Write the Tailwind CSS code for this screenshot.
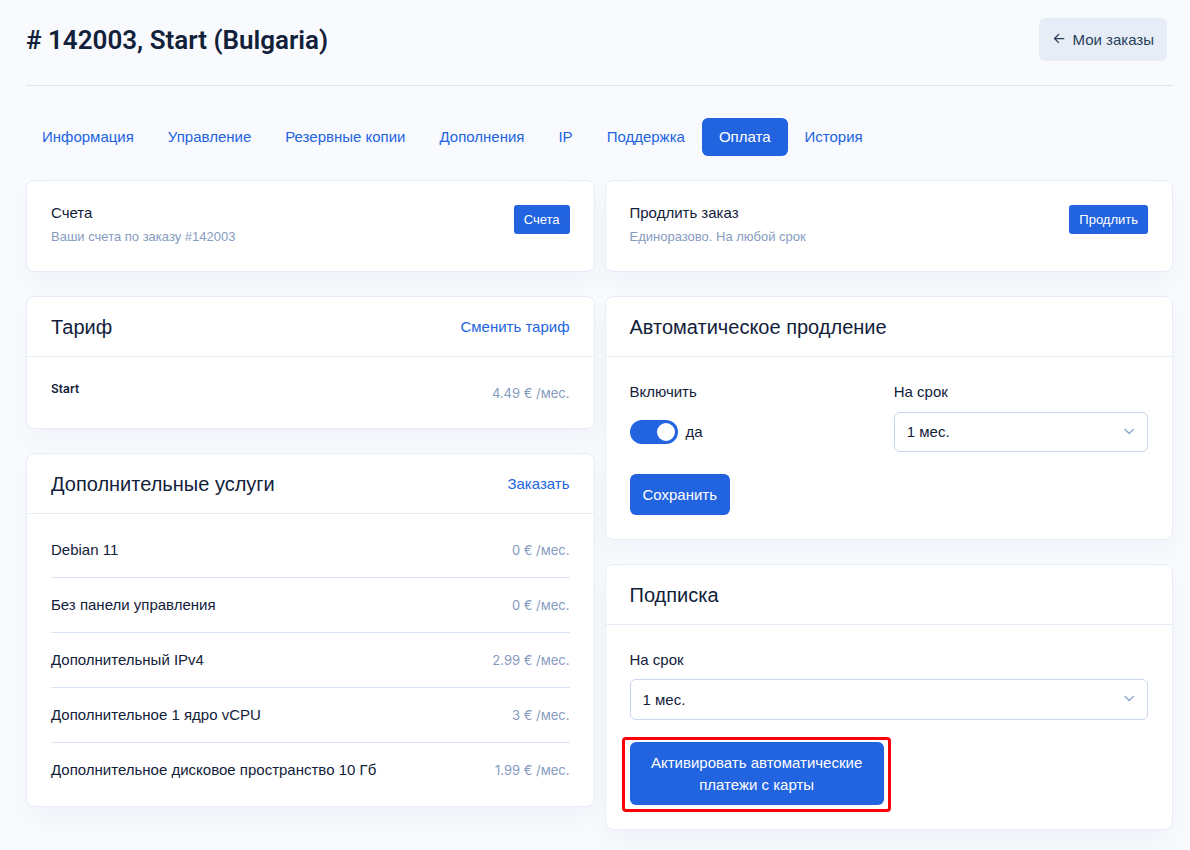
<!DOCTYPE html>
<html lang="ru">
<head>
  <meta charset="UTF-8" />
  <meta name="viewport" content="width=device-width, initial-scale=1.0" />
  <title>Заказ # 142003</title>
  <script src="https://cdn.jsdelivr.net/npm/@tailwindcss/browser@4"></script>
</head>
<body class="min-h-screen bg-[#f8fafe] pl-[26px] pr-[17px] pb-5 font-['Liberation_Sans',Arial,sans-serif] text-[15px] leading-[22px] text-[#12213a]">
  <!-- Header -->
  <header class="flex items-center justify-between border-b border-[#d9e5f2] pt-[18px] pb-6 pr-1.5">
    <h1 class="font-['Roboto',sans-serif] text-[26px] font-semibold"># 142003, Start (Bulgaria)</h1>
    <a href="#" class="flex h-[43px] items-center gap-1.5 rounded-md bg-[#e6edf7] px-[13px] text-[#283e59]">
      <svg class="size-[15px]" viewBox="0 0 24 24" fill="none" stroke="currentColor" stroke-width="2" stroke-linecap="round" stroke-linejoin="round"><path d="M19 10.500H4M10.500 4 4 10.500l6.500 6.500" /></svg>
      Мои заказы
    </a>
  </header>

  <!-- Tabs -->
  <nav class="mt-8 mb-6 -ml-px flex text-[#2264e0]">
    <a href="#" class="px-[17px] py-2">Информация</a>
    <a href="#" class="px-[17px] py-2">Управление</a>
    <a href="#" class="px-[17px] py-2">Резервные копии</a>
    <a href="#" class="px-[17px] py-2">Дополнения</a>
    <a href="#" class="px-[17px] py-2">IP</a>
    <a href="#" class="px-[17px] py-2">Поддержка</a>
    <a href="#" class="rounded-md bg-[#2264e0] px-[17px] py-2 text-white">Оплата</a>
    <a href="#" class="px-[17px] py-2">История</a>
  </nav>

  <main class="grid grid-cols-2 gap-[10px]">
    <!-- Left column -->
    <div class="flex flex-col gap-6">
      <section class="flex items-start justify-between rounded-lg border border-[#e6edf8] bg-white p-6 shadow-[0_12px_24px_rgba(18,38,63,0.03)]">
        <div>
          <h2 class="mb-1.5 leading-4">Счета</h2>
          <p class="text-[13px] leading-5 text-[#869bc0]">Ваши счета по заказу #142003</p>
        </div>
        <button type="button" class="h-[29px] rounded-[3px] bg-[#2264e0] px-[10px] text-[13px] text-white">Счета</button>
      </section>

      <section class="rounded-lg border border-[#e6edf8] bg-white shadow-[0_12px_24px_rgba(18,38,63,0.03)]">
        <div class="flex h-[60px] items-center justify-between border-b border-[#e6edf8] px-6">
          <h2 class="text-xl">Тариф</h2>
          <a href="#" class="text-[#2264e0]">Сменить тариф</a>
        </div>
        <div class="flex items-start justify-between p-6 pb-[23px]">
          <h3 class="font-['Inter',sans-serif] text-xs leading-4 font-semibold">Start</h3>
          <p class="font-['Inter',sans-serif] text-[13px] leading-6 text-[#869bc0]">4.49 € /мес.</p>
        </div>
      </section>

      <section class="rounded-lg border border-[#e6edf8] bg-white shadow-[0_12px_24px_rgba(18,38,63,0.03)]">
        <div class="flex h-[60px] items-center justify-between border-b border-[#e6edf8] px-6">
          <h2 class="text-xl">Дополнительные услуги</h2>
          <a href="#" class="text-[#2264e0]">Заказать</a>
        </div>
        <ul class="divide-y divide-[#d9e5f2] px-6 py-[9px]">
          <li class="flex justify-between py-4">Debian 11 <span class="font-['Inter',sans-serif] text-[13px] text-[#869bc0]">0 € /мес.</span></li>
          <li class="flex justify-between py-4">Без панели управления <span class="font-['Inter',sans-serif] text-[13px] text-[#869bc0]">0 € /мес.</span></li>
          <li class="flex justify-between py-4">Дополнительный IPv4 <span class="font-['Inter',sans-serif] text-[13px] text-[#869bc0]">2.99 € /мес.</span></li>
          <li class="flex justify-between py-4">Дополнительное 1 ядро vCPU <span class="font-['Inter',sans-serif] text-[13px] text-[#869bc0]">3 € /мес.</span></li>
          <li class="flex justify-between py-4">Дополнительное дисковое пространство 10 Гб <span class="font-['Inter',sans-serif] text-[13px] text-[#869bc0]">1.99 € /мес.</span></li>
        </ul>
      </section>
    </div>

    <!-- Right column -->
    <div class="flex flex-col gap-6">
      <section class="flex items-start justify-between rounded-lg border border-[#e6edf8] bg-white p-6 shadow-[0_12px_24px_rgba(18,38,63,0.03)]">
        <div>
          <h2 class="mb-1.5 leading-4">Продлить заказ</h2>
          <p class="text-[13px] leading-5 text-[#869bc0]">Единоразово. На любой срок</p>
        </div>
        <button type="button" class="h-[29px] rounded-[3px] bg-[#2264e0] px-[10px] text-[13px] text-white">Продлить</button>
      </section>

      <section class="rounded-lg border border-[#e6edf8] bg-white shadow-[0_12px_24px_rgba(18,38,63,0.03)]">
        <div class="flex h-[60px] items-center border-b border-[#e6edf8] px-6">
          <h2 class="text-xl">Автоматическое продление</h2>
        </div>
        <form class="p-6">
          <div class="mb-[22px] grid grid-cols-2 gap-[10px]">
            <div>
              <label for="auto" class="mb-[9px] block">Включить</label>
              <div class="flex h-10 items-center gap-2">
                <input id="auto" type="checkbox" checked class="h-6 w-12 appearance-none rounded-full bg-[#b1c2d9] p-[3px] before:block before:size-[18px] before:rounded-full before:bg-white checked:bg-[#2264e0] checked:before:ml-6" />
                <label for="auto">да</label>
              </div>
            </div>
            <div>
              <label for="auto-term" class="mb-[9px] block">На срок</label>
              <div class="relative">
                <select id="auto-term" class="h-10 w-full appearance-none rounded-md border border-[#cad7ea] bg-white px-3">
                  <option>1 мес.</option>
                </select>
                <svg class="pointer-events-none absolute top-[15px] right-3 h-2.5 w-3" viewBox="0 0 12 10" fill="none" stroke="#95aac9" stroke-width="1.5" stroke-linecap="round" stroke-linejoin="round"><path d="M1 2.500 5.200 6.500 9.400 2.500" /></svg>
              </div>
            </div>
          </div>
          <button type="button" class="block h-[41px] rounded-md bg-[#2264e0] px-[13px] text-white">Сохранить</button>
        </form>
      </section>

      <section class="rounded-lg border border-[#e6edf8] bg-white shadow-[0_12px_24px_rgba(18,38,63,0.03)]">
        <div class="flex h-[60px] items-center border-b border-[#e6edf8] px-6">
          <h2 class="text-xl">Подписка</h2>
        </div>
        <form class="p-6">
          <label for="sub-term" class="mb-2 block">На срок</label>
          <div class="relative mb-[22px]">
            <select id="sub-term" class="h-[41px] w-full appearance-none rounded-md border border-[#cad7ea] bg-white px-3">
              <option>1 мес.</option>
            </select>
            <svg class="pointer-events-none absolute top-[15px] right-3 h-2.5 w-3" viewBox="0 0 12 10" fill="none" stroke="#95aac9" stroke-width="1.5" stroke-linecap="round" stroke-linejoin="round"><path d="M1 2.500 5.200 6.500 9.400 2.500" /></svg>
          </div>
          <div class="grid grid-cols-2 gap-[10px]">
            <div class="relative">
              <button type="button" class="block h-[63px] w-full rounded-md bg-[#2264e0] px-3 text-white">Активировать автоматические платежи с карты</button>
              <!-- Highlight frame -->
              <div class="pointer-events-none absolute -top-[5px] -right-[7px] -bottom-[7px] -left-2 rounded-sm border-3 border-[#fb0007]"></div>
            </div>
          </div>
        </form>
      </section>
    </div>
  </main>
</body>
</html>
